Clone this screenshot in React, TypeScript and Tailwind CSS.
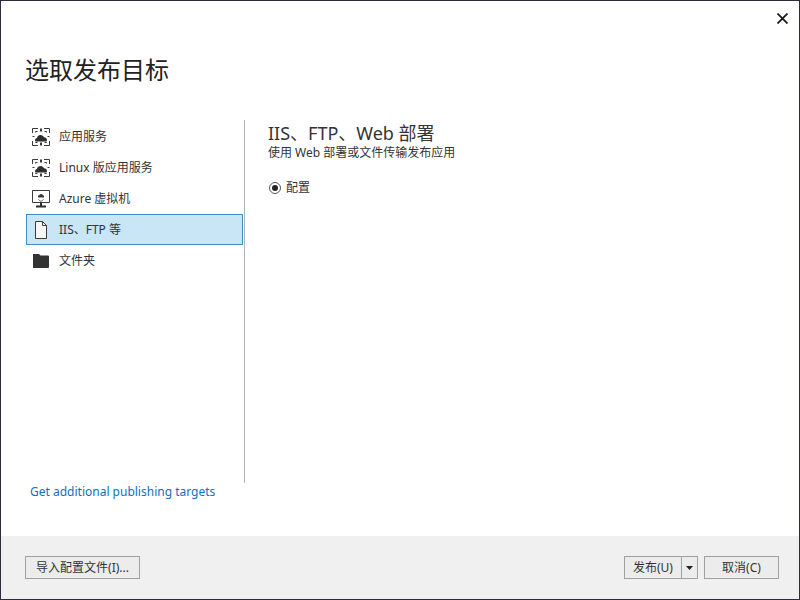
const FONT = "font-['Noto_Sans','Noto_Sans_CJK_SC',sans-serif]"

function CloudServiceIcon() {
  return (
    <svg width="18" height="18" viewBox="0 0 18 18" fill="none" className="shrink-0">
      <g stroke="#3a3a3a" strokeWidth="1">
        <path d="M.5 5V.5H6M12 .5h5.500V5M17.500 13v4.500H12M6 17.500H.5V13" />
        <path d="M3.500 4.500V3.500h2M12.500 3.500h2v1M14.500 14v.5h-2M5.500 14.500h-2V14" />
        <path d="M8.500 .5v3M9.500 .5v3M.5 8.500h2M15.500 8.500h2M8.500 14.500v3M9.500 14.500v3" />
      </g>
      <path d="M3 12.500c0-1.500 1-2.300 2-2.500 .3-1.800 1.800-3 3.600-3 1.600 0 2.900 1 3.400 2.300 1.700 0 3 1.300 3 2.700 0 .5-.2 1-.5 1.500H3.500c-.3-.3-.5-.6-.5-1z" fill="#2d2d2d" />
    </svg>
  )
}

function VmIcon() {
  return (
    <svg width="18" height="18" viewBox="0 0 18 18" fill="none" className="shrink-0">
      <path d="M.5 .5h17v12H.5z" stroke="#3a3a3a" />
      <path d="M6 6.500c0-1 .8-1.500 1.500-1.500 .4-.8 1-1 1.600-1 .9 0 1.600.6 1.800 1.300 .8 0 1.300.6 1.300 1.200s-.4.900-1 .9H6.800C6.300 7.400 6 7 6 6.500z" fill="#3a3a3a" />
      <path d="M6.500 9.500l2.500 2 2.500-2" stroke="#6a6a6a" />
      <path d="M8 13h2v2.500H8zM4 15.500h10v2H4z" fill="#2d2d2d" />
    </svg>
  )
}

function FileIcon() {
  return (
    <svg width="18" height="18" viewBox="0 0 18 18" fill="none" className="shrink-0">
      <path d="M3.500 .5h7l4 4v13h-11z" fill="#f6f6f6" stroke="#3a3a3a" />
      <path d="M10.500 .5v4h4" stroke="#3a3a3a" />
    </svg>
  )
}

function FolderIcon() {
  return (
    <svg width="18" height="18" viewBox="0 0 18 18" className="shrink-0">
      <path d="M1 2h6l1.500 1.500H16a1 1 0 0 1 1 1V15a1 1 0 0 1-1 1H1z" fill="#333333" />
    </svg>
  )
}

const targets = [
  { label: '应用服务', icon: <CloudServiceIcon /> },
  { label: 'Linux 版应用服务', icon: <CloudServiceIcon /> },
  { label: 'Azure 虚拟机', icon: <VmIcon /> },
  { label: 'IIS、FTP 等', icon: <FileIcon />, selected: true },
  { label: '文件夹', icon: <FolderIcon /> },
]

export default function App() {
  return (
    <div className={`${FONT} w-[800px] h-[600px] flex flex-col bg-white border border-[#2c2c3c] text-[#333333] overflow-hidden`}>
      <div className="h-[535px] flex flex-col">
        <div className="flex justify-end pt-[12px] pr-[11px] h-[37px]">
          <svg width="11" height="11" viewBox="0 0 11 11" stroke="#1a1a1a" strokeWidth="1.800">
            <path d="M.5 .5l10 10M10.500 .5l-10 10" />
          </svg>
        </div>
        <h1 className="pl-[24px] h-[82px] pt-[12px] text-[24px] leading-[40px] text-[#222222]">选取发布目标</h1>
        <div className="flex h-[363px]">
          <div className="w-[243px] pl-[25px] pr-[1px] pt-[1px]">
            {targets.map((t) => (
              <div
                key={t.label}
                className={`h-[31px] flex items-center gap-[8px] pl-[5px] text-[12px] border ${
                  t.selected ? 'bg-[#c9e6f6] border-[#3f8fc0]' : 'border-transparent'
                }`}
              >
                {t.icon}
                <span className="ml-[1px] whitespace-nowrap">{t.label}</span>
              </div>
            ))}
          </div>
          <div className="w-[1px] bg-[#a9b5bf]" />
          <div className="pl-[23px] pt-[1px]">
            <div className="text-[18px] leading-[24px] text-[#333333] whitespace-nowrap">IIS、FTP、Web 部署</div>
            <div className="text-[12px] leading-[16px] whitespace-nowrap">使用 Web 部署或文件传输发布应用</div>
            <div className="flex items-center gap-[5px] mt-[19px] ml-[1px] text-[12px] leading-[16px]">
              <div className="w-[12px] h-[12px] rounded-full border border-[#555555] flex items-center justify-center">
                <div className="w-[6px] h-[6px] rounded-full bg-[#222222]" />
              </div>
              <span>配置</span>
            </div>
          </div>
        </div>
        <a className="pl-[29px] mt-[1px] text-[12px] leading-[16px] text-[#0e70c0] whitespace-nowrap">Get additional publishing targets</a>
      </div>
      <div className="flex-1 bg-[#f0f0f0] flex items-start justify-between pl-[24px] pr-[20px] pt-[20px] text-[12px]">
        <button className="h-[23px] w-[115px] bg-[#ececec] border border-[#a0a0a0] flex items-center justify-center">
          导入配置文件(I)...
        </button>
        <div className="flex gap-[6px]">
          <div className="h-[23px] w-[74px] bg-[#ececec] border border-[#a0a0a0] flex">
            <button className="flex-1 flex items-center justify-center">发布(U)</button>
            <div className="w-[1px] bg-[#a0a0a0]" />
            <div className="w-[15px] flex items-center justify-center">
              <svg width="7" height="4" viewBox="0 0 7 4"><path d="M0 0h7L3.500 4z" fill="#222222" /></svg>
            </div>
          </div>
          <button className="h-[23px] w-[75px] bg-[#ececec] border border-[#a0a0a0] flex items-center justify-center">
            取消(C)
          </button>
        </div>
      </div>
    </div>
  )
}
